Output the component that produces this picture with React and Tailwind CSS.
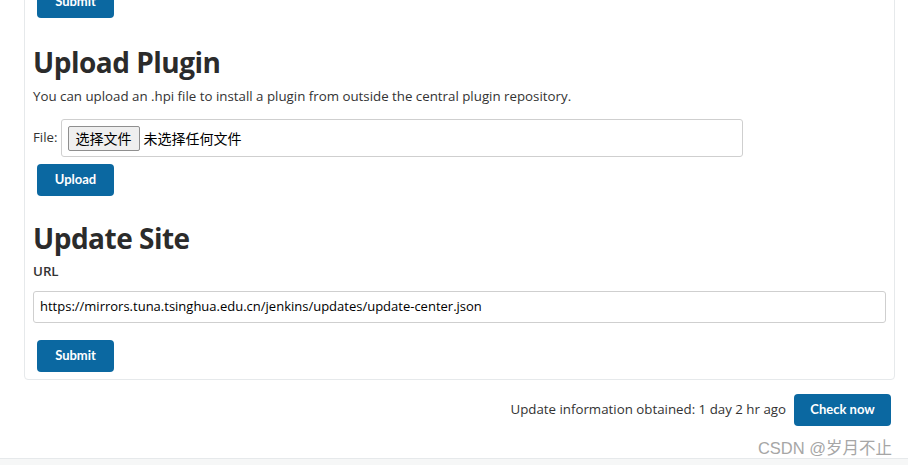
export default function App() {
  const font = { fontFamily: '"Open Sans", "Noto Sans CJK SC", sans-serif' };
  const btnFont = { fontFamily: 'Lato, "Open Sans", sans-serif' };
  const btn =
    "w-[77px] h-[32px] rounded-[4px] bg-[#0b68a1] text-white text-[13px] font-bold flex items-center justify-center";

  return (
    <div className="w-[908px] h-[465px] bg-white overflow-hidden flex flex-col text-[#333]" style={font}>
      {/* main panel */}
      <div className="ml-[24px] w-[871px] mt-[-40px] h-[420px] border border-[#e6e9eb] rounded-b-[4px] pl-[12px] pr-[8px] flex flex-col shrink-0">
        <div className="mt-[25px]">
          <button className={btn} style={btnFont}>Submit</button>
        </div>

        <h2 className="mt-[27px] h-[34px] leading-[34px] text-[28px] tracking-[-0.5px] font-bold text-[#2b2b2b] -ml-[4px]">
          Upload Plugin
        </h2>
        <p className="mt-[8px] text-[13.3px] leading-[18px] -ml-[4px]">
          You can upload an .hpi file to install a plugin from outside the central plugin repository.
        </p>

        <div className="mt-[14px] flex items-center -ml-[4px]">
          <span className="text-[13.3px] mr-[3px]">File:</span>
          <div className="w-[682px] h-[38px] border border-[#cfcfcf] rounded-[3px] flex items-center pl-[6px]">
            <span className="h-[25px] px-[7px] border border-[#8f8f8f] rounded-[2px] bg-[#efefef] text-[14px] text-black flex items-center">
              选择文件
            </span>
            <span className="ml-[4px] text-[14px] text-black">未选择任何文件</span>
          </div>
        </div>

        <div className="mt-[7px]">
          <button className={btn} style={btnFont}>Upload</button>
        </div>

        <h2 className="mt-[25px] h-[34px] leading-[34px] text-[28px] tracking-[-0.5px] font-bold text-[#2b2b2b] -ml-[4px]">
          Update Site
        </h2>
        <label className="mt-[7px] text-[13.3px] font-semibold leading-[18px] -ml-[4px]">URL</label>

        <div className="mt-[11px] -ml-[4px] w-[853px] h-[32px] border border-[#cfcfcf] rounded-[3px] flex items-center pl-[6px] text-[13px] text-black">
          https://mirrors.tuna.tsinghua.edu.cn/jenkins/updates/update-center.json
        </div>

        <div className="mt-[17px]">
          <button className={btn} style={btnFont}>Submit</button>
        </div>
      </div>

      {/* footer */}
      <div className="mt-[14px] flex items-center justify-end pr-[17px] shrink-0">
        <span className="text-[13.3px] text-[#333] mr-[8px]">Update information obtained: 1 day 2 hr ago</span>
        <button
          className="w-[97px] h-[32px] rounded-[4px] bg-[#0b68a1] text-white text-[13px] font-bold flex items-center justify-center"
          style={btnFont}
        >
          Check now
        </button>
      </div>

      <div className="mt-[12px] flex justify-end pr-[16px] shrink-0">
        <span
          className="text-[16.5px] leading-[20px] text-[#a6a6a6]"
          style={{ fontFamily: '"Liberation Sans", "Noto Sans CJK SC", sans-serif' }}
        >
          CSDN @岁月不止
        </span>
      </div>

      <div className="flex-1 bg-[#f6f7f7] border-t border-[#e6e9eb]" />
    </div>
  );
}
